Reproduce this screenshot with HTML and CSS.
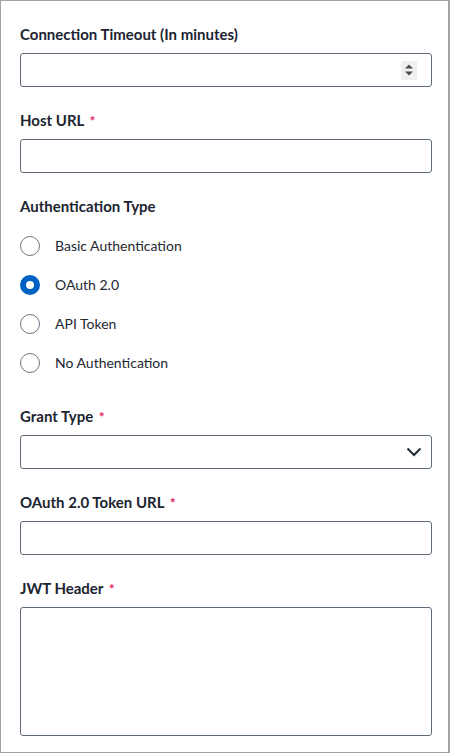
FILE: index.html
```html
<!DOCTYPE html>
<html>
<head>
<meta charset="utf-8">
<link rel="stylesheet" href="styles.css">
</head>
<body>
<div class="panel">
  <div class="field">
    <div class="label">Connection Timeout (In minutes)</div>
    <div class="input number">
      <span class="spinner">
        <svg width="16" height="18" viewBox="0 0 16 18"><path d="M4 7.5 L8 3.5 L12 7.5 Z" fill="#4a4a4a"/><path d="M4 10.5 L8 14.5 L12 10.5 Z" fill="#4a4a4a"/></svg>
      </span>
    </div>
  </div>
  <div class="field">
    <div class="label">Host URL <span class="req">*</span></div>
    <div class="input"></div>
  </div>
  <div class="field">
    <div class="label">Authentication Type</div>
    <div class="radios">
      <div class="radio"><span class="dot"></span><span class="rtext">Basic Authentication</span></div>
      <div class="radio"><span class="dot on"></span><span class="rtext">OAuth 2.0</span></div>
      <div class="radio"><span class="dot"></span><span class="rtext">API Token</span></div>
      <div class="radio"><span class="dot"></span><span class="rtext">No Authentication</span></div>
    </div>
  </div>
  <div class="field">
    <div class="label">Grant Type <span class="req">*</span></div>
    <div class="input select">
      <svg width="16" height="10" viewBox="0 0 16 10"><path d="M1.5 1.5 L8 8 L14.5 1.5" fill="none" stroke="#222b36" stroke-width="2"/></svg>
    </div>
  </div>
  <div class="field">
    <div class="label">OAuth 2.0 Token URL <span class="req">*</span></div>
    <div class="input"></div>
  </div>
  <div class="field">
    <div class="label">JWT Header <span class="req">*</span></div>
    <div class="input area"></div>
  </div>
</div>
</body>
</html>
```
FILE: styles.css
```css
html, body { margin: 0; padding: 0; background: #fff; }
body { font-family: Lato, "Liberation Sans", sans-serif; color: #1e2732; }
.panel {
  box-sizing: border-box;
  width: 450px;
  height: 753px;
  border: 1px solid #a3a3a3;
  border-right-width: 2px;
  padding: 23px 16px 0 19px;
  display: flex;
  flex-direction: column;
  gap: 23px;
}
.field { display: flex; flex-direction: column; gap: 9px; }
.label { font-size: 15px; font-weight: 700; line-height: 20px; height: 20px; color: #1b2430; }
.req { color: #e0245e; font-size: 14px; font-weight: 700; margin-left: 2px; }
.input {
  box-sizing: border-box;
  height: 34px;
  border: 1px solid #5f6b78;
  border-radius: 3px;
  background: #fff;
  display: flex;
  align-items: center;
  justify-content: flex-end;
}
.spinner {
  width: 16px; height: 19px; background: #f0f0f0;
  margin-right: 14px; display: flex; align-items: center; justify-content: center;
}
.select { padding-right: 9px; }
.area { height: 129px; }
.radios { display: flex; flex-direction: column; margin-top: 1px; margin-bottom: 1px; }
.radio { height: 39px; display: flex; align-items: center; gap: 15px; }
.dot {
  box-sizing: border-box; width: 20px; height: 20px; border-radius: 50%;
  border: 1px solid #6b7580; background: #fff;
}
.dot.on { border: 6px solid #0061c4; }
.rtext { font-size: 14px; color: #1e2732; }
```
